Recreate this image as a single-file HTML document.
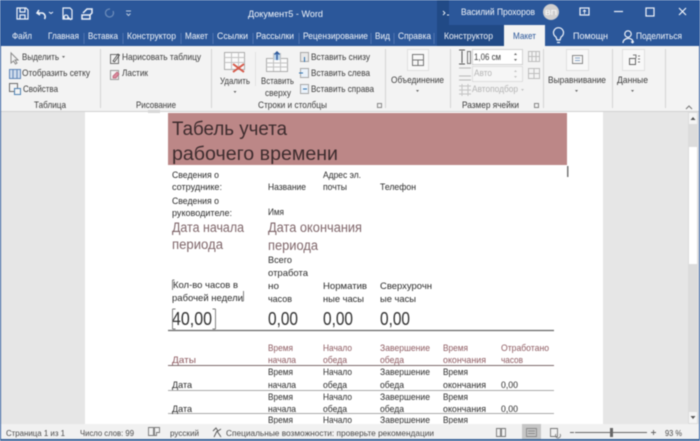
<!DOCTYPE html>
<html lang="ru"><head><meta charset="utf-8"><title>Документ5 - Word</title>
<style>
html,body{margin:0;padding:0;width:700px;height:441px;overflow:hidden;background:#fff}
svg{display:block;filter:blur(.4px)}
text{font-family:"Liberation Sans",sans-serif;font-size:9px;fill:#3a3a3a}
.w text{fill:#f2f5fa;font-size:9.2px}
.r text{fill:#3c3c3c;font-size:9.2px}
.d text{fill:#2c2c2c;font-size:9.4px}
.h text{fill:#8d5a60;font-size:9.4px}
.p text{fill:#7f666a;font-size:13.5px}
.b text{fill:#333;font-size:18.500px}
.s text{fill:#4a4a4a;font-size:8.400px}
</style></head><body>
<svg width="700" height="441" viewBox="0 0 700 441" xmlns="http://www.w3.org/2000/svg">
<rect width="700" height="441" fill="#e6e6e6"/>
<!-- title bar -->
<rect width="700" height="46" fill="#2b579a"/>
<rect x="437" y="0" width="67" height="46" fill="#214a86"/>
<rect x="449" y="0" width="55" height="25" fill="#2b579a"/>
<rect x="504" y="25" width="41" height="22" fill="#f3f3f3"/>
<!-- qat icons -->
<g fill="none" stroke="#eef2f9" stroke-width="1.200">
<path d="M17 8h9l2 2v9H17zM20 8v4h5V8M20 19v-4h5v4"/>
<path d="M39 10l-2 3 3 2M37.500 13h5a4 4 0 0 1 2 6" stroke-width="1.500"/>
<path d="M49 12l2 1.500 2-1.500" stroke-width="1"/>
<path d="M63 8h7l2 2v9H63zM66 15a2 2 0 1 0 .1 0M68 17l3 3"/>
<path d="M83 13l4-4 5 0 0 4-2 2M82 15h8v4h-8z" stroke-width="1.500"/>
<path d="M110 9a4 4 0 1 0 3 2" stroke="#6c8cba"/>
<path d="M126 11h5M126.500 13.500l2 2 2-2" stroke-width="1" stroke="#b8c8de"/>
<path d="M443 11l2 2-2 2M447 15h2" stroke-width=".9"/>
<rect x="580" y="8" width="9" height="7"/><path d="M584.500 14v-4M583 11.500l1.500-1.500 1.500 1.500" stroke-width=".9"/>
<path d="M614 11.500h9"/>
<rect x="646" y="8" width="8" height="8"/>
<path d="M679 8l7 7M686 8l-7 7"/>
<path d="M557 40l-1-3a5 5 0 1 1 5 0l-1 3zM557 42.500h3"/>
<circle cx="628" cy="34" r="3.200"/><path d="M623 43c0-6 10-6 10-1M631 42h3M632.500 40.500v3"/>
</g>
<circle cx="551" cy="12" r="8" fill="#d0cfcf"/>
<g class="w">
<text x="248" y="17" textLength="75" lengthAdjust="spacingAndGlyphs">Документ5 - Word</text>
<text x="12" y="39" textLength="20" lengthAdjust="spacingAndGlyphs">Файл</text>
<text x="48" y="39" textLength="31" lengthAdjust="spacingAndGlyphs">Главная</text>
<text x="88" y="39" textLength="30" lengthAdjust="spacingAndGlyphs">Вставка</text>
<text x="127" y="39" textLength="49" lengthAdjust="spacingAndGlyphs">Конструктор</text>
<text x="185" y="39" textLength="23" lengthAdjust="spacingAndGlyphs">Макет</text>
<text x="217" y="39" textLength="31" lengthAdjust="spacingAndGlyphs">Ссылки</text>
<text x="256" y="39" textLength="38" lengthAdjust="spacingAndGlyphs">Рассылки</text>
<text x="303" y="39" textLength="65" lengthAdjust="spacingAndGlyphs">Рецензирование</text>
<text x="375" y="39" textLength="15" lengthAdjust="spacingAndGlyphs">Вид</text>
<text x="398" y="39" textLength="33" lengthAdjust="spacingAndGlyphs">Справка</text>
<text x="444" y="39" textLength="49" lengthAdjust="spacingAndGlyphs">Конструктор</text>
<text x="573" y="39" textLength="35" lengthAdjust="spacingAndGlyphs">Помощн</text>
<text x="636" y="39" textLength="46" lengthAdjust="spacingAndGlyphs">Поделиться</text>
<text x="461" y="15" textLength="74" lengthAdjust="spacingAndGlyphs">Василий Прохоров</text>
</g>
<text x="513" y="39" textLength="23" lengthAdjust="spacingAndGlyphs" style="fill:#2b579a;font-size:9.2px">Макет</text>
<text x="545" y="15" textLength="12" lengthAdjust="spacingAndGlyphs" style="fill:#fff;font-size:7.500px">ВП</text>
<!-- tab separators -->
<path d="M84 33v11M123 33v11M181 33v11M213 33v11M253 33v11M299 33v11M371 33v11M394 33v11M434 33v11" stroke="#5a7db3" stroke-width=".8"/>
<!-- ribbon -->
<rect y="46" width="700" height="65" fill="#f3f3f3"/>
<rect x="504" y="46" width="41" height="2" fill="#f3f3f3"/>
<path d="M100.500 49v59M211.500 49v59M385.500 49v59M450.500 49v59M543.500 49v59M612.500 49v59M665.500 49v59" stroke="#d4d4d4"/>
<path d="M255.500 52v34" stroke="#e2e2e2"/>
<path d="M0 111.500h700" stroke="#d2d2d2"/>
<!-- left icons -->
<g fill="none" stroke-width="1">
<path d="M11 53v10l2.500-2 2 3 1.500-1-2-3h3z" stroke="#8a8a8a"/>
<rect x="9.500" y="69.500" width="11" height="9" stroke="#5f86b8" fill="#cfdcec"/>
<path d="M13 70v8M17 70v8" stroke="#5f86b8"/>
<rect x="9.500" y="83.500" width="8" height="8" stroke="#6b6b6b"/>
<rect x="14.500" y="88.500" width="6" height="6" stroke="#4f82b4" fill="#f3f3f3"/>
<rect x="110.500" y="54.500" width="8" height="9" stroke="#6f6f6f"/>
<path d="M113 61l5-7 1.500 1-5 7z" stroke="#444" stroke-width=".8"/>
<rect x="110.500" y="70.500" width="8" height="9" stroke="#9a9a9a"/>
<path d="M113 76l4-4 2 2-3 4h-3z" fill="#d98a9c" stroke="#b85a70" stroke-width=".7"/>
<!-- delete -->
<rect x="224.500" y="52.500" width="20" height="17" stroke="#adadad" fill="#fafafa"/>
<path d="M224.500 57.500h20M224.500 62.500h20M231.500 52.500v17M238.500 52.500v17" stroke="#c2c2c2"/>
<path d="M233 64l11 8M244 64l-11 8" stroke="#d65a4a" stroke-width="2"/>
<!-- insert above -->
<rect x="266.500" y="58.500" width="21" height="13" stroke="#adadad" fill="#fafafa"/>
<rect x="273" y="53" width="7" height="7" fill="#bcd6ee" stroke="none"/>
<path d="M266.500 63h21M266.500 67h21M273.500 53v18M280.500 53v18" stroke="#c2c2c2"/>
<path d="M277 60v-8M274.500 54.500l2.500-2.500 2.500 2.500" stroke="#2b579a" stroke-width="1.400"/>
<!-- small insert -->
<rect x="300.500" y="52.500" width="8" height="9" stroke="#a8a8a8" fill="#e8e8e8"/><path d="M304.500 57v5" stroke="#2b70b0"/>
<rect x="300.500" y="68.500" width="8" height="9" stroke="#a8a8a8" fill="#eaf2fa"/><path d="M299 73h4" stroke="#2b70b0"/>
<rect x="300.500" y="84.500" width="8" height="9" stroke="#a8a8a8" fill="#eaf2fa"/><path d="M303 89h4" stroke="#2b70b0"/>
<!-- large button boxes -->
<rect x="407.500" y="49.500" width="21" height="21" stroke="#e0e0e0" fill="#f8f8f8"/>
<rect x="412.500" y="54.500" width="11" height="11" stroke="#777"/><path d="M412.500 60h11M418 60v5.500" stroke="#777"/>
<rect x="566.500" y="49.500" width="22" height="21" stroke="#e0e0e0" fill="#f8f8f8"/>
<rect x="572.500" y="55.500" width="10" height="8" stroke="#888"/><path d="M575 58h5M575 60.500h5" stroke="#8aa7c8"/>
<rect x="622.500" y="49.500" width="22" height="21" stroke="#e0e0e0" fill="#f8f8f8"/>
<rect x="629.500" y="58.500" width="6" height="6" stroke="#666"/><path d="M633 55h3v3M638 56h2M638 59h2M638 62h2" stroke="#777"/>
<!-- cell size -->
<path d="M459 50h6M459 64h6M462 51v12" stroke="#555"/><rect x="467.500" y="51.500" width="3" height="12" stroke="#777"/>
<rect x="472.500" y="49.500" width="50" height="15" fill="#fff" stroke="#d0d0d0"/>
<rect x="472.500" y="66.500" width="50" height="15" fill="#f6f6f6" stroke="#dedede"/>
<rect x="528.500" y="51.500" width="11" height="10" stroke="#bdbdbd"/><path d="M532 52v9M536 52v9M529 56.500h10" stroke="#bdbdbd"/>
<rect x="528.500" y="68.500" width="11" height="10" stroke="#bdbdbd"/><path d="M534 69v9M529 73.500h10" stroke="#bdbdbd"/>
<path d="M459 68h12M459 76h12M459 80h12" stroke="#b8b8b8"/>
<path d="M459 86h12M459 90h12M459 94h12M462 84v12M468 84v12" stroke="#c4c4c4"/>
<rect x="377.500" y="103.500" width="4" height="4" stroke="#888"/>
<rect x="534.500" y="103.500" width="4" height="4" stroke="#888"/>
<path d="M686 109l3-3 3 3" stroke="#777"/>
</g>
<!-- ribbon small marks -->
<g fill="#666">
<path d="M62 56h3l-1.500 2zM233.500 91h3l-1.500 2zM416 90h3l-1.500 2zM575 90h3l-1.500 2zM631 90h3l-1.500 2z"/>
<path d="M514 55h3l-1.500-2zM514 59h3l-1.500 2z"/>
<path d="M514 72h3l-1.500-2zM514 76h3l-1.500 2zM521 89h3l-1.500 2z" fill="#c4c4c4"/>
</g>
<g class="r">
<text x="22" y="60" textLength="37" lengthAdjust="spacingAndGlyphs">Выделить</text>
<text x="22" y="76" textLength="68" lengthAdjust="spacingAndGlyphs">Отобразить сетку</text>
<text x="23" y="92" textLength="35" lengthAdjust="spacingAndGlyphs">Свойства</text>
<text x="34" y="108" textLength="32" lengthAdjust="spacingAndGlyphs">Таблица</text>
<text x="122" y="60" textLength="79" lengthAdjust="spacingAndGlyphs">Нарисовать таблицу</text>
<text x="122" y="76" textLength="26" lengthAdjust="spacingAndGlyphs">Ластик</text>
<text x="136" y="108" textLength="40" lengthAdjust="spacingAndGlyphs">Рисование</text>
<text x="220" y="84" textLength="30" lengthAdjust="spacingAndGlyphs">Удалить</text>
<text x="261" y="84" textLength="33" lengthAdjust="spacingAndGlyphs">Вставить</text>
<text x="265" y="96" textLength="26" lengthAdjust="spacingAndGlyphs">сверху</text>
<text x="311" y="60" textLength="59" lengthAdjust="spacingAndGlyphs">Вставить снизу</text>
<text x="311" y="76" textLength="59" lengthAdjust="spacingAndGlyphs">Вставить слева</text>
<text x="311" y="92" textLength="63" lengthAdjust="spacingAndGlyphs">Вставить справа</text>
<text x="258" y="108" textLength="69" lengthAdjust="spacingAndGlyphs">Строки и столбцы</text>
<text x="391" y="83" textLength="53" lengthAdjust="spacingAndGlyphs">Объединение</text>
<text x="474" y="60" textLength="27" lengthAdjust="spacingAndGlyphs">1,06 см</text>
<text x="474" y="76" textLength="18" lengthAdjust="spacingAndGlyphs" style="fill:#b4b4b4">Авто</text>
<text x="472" y="92" textLength="46" lengthAdjust="spacingAndGlyphs" style="fill:#b4b4b4">Автоподбор</text>
<text x="462" y="108" textLength="57" lengthAdjust="spacingAndGlyphs">Размер ячейки</text>
<text x="548" y="83" textLength="58" lengthAdjust="spacingAndGlyphs">Выравнивание</text>
<text x="617" y="83" textLength="31" lengthAdjust="spacingAndGlyphs">Данные</text>
</g>
<!-- page -->
<rect x="85" y="112" width="518" height="312" fill="#fff"/>
<rect x="148" y="110" width="12" height="3" fill="#d8d8d8"/>
<rect x="168" y="113" width="399" height="52" fill="#bc8787"/>
<rect x="567" y="166" width="1.500" height="11" fill="#777"/>
<text x="172" y="135" textLength="115" lengthAdjust="spacingAndGlyphs" style="font-size:19px;fill:#3d2c2e">Табель учета</text>
<text x="172" y="160" textLength="166" lengthAdjust="spacingAndGlyphs" style="font-size:19px;fill:#3d2c2e">рабочего времени</text>
<g class="d">
<text x="172" y="178" textLength="47" lengthAdjust="spacingAndGlyphs">Сведения о</text>
<text x="172" y="190" textLength="50" lengthAdjust="spacingAndGlyphs">сотруднике:</text>
<text x="268" y="190" textLength="38" lengthAdjust="spacingAndGlyphs">Название</text>
<text x="323" y="178" textLength="38" lengthAdjust="spacingAndGlyphs">Адрес эл.</text>
<text x="323" y="190" textLength="24" lengthAdjust="spacingAndGlyphs">почты</text>
<text x="380" y="190" textLength="36" lengthAdjust="spacingAndGlyphs">Телефон</text>
<text x="172" y="204" textLength="47" lengthAdjust="spacingAndGlyphs">Сведения о</text>
<text x="172" y="216" textLength="60" lengthAdjust="spacingAndGlyphs">руководителе:</text>
<text x="268" y="215" textLength="16" lengthAdjust="spacingAndGlyphs">Имя</text>
<text x="268" y="263" textLength="24" lengthAdjust="spacingAndGlyphs">Всего</text>
<text x="268" y="276" textLength="40" lengthAdjust="spacingAndGlyphs">отработа</text>
<text x="268" y="289" textLength="11" lengthAdjust="spacingAndGlyphs">но</text>
<text x="268" y="302" textLength="24" lengthAdjust="spacingAndGlyphs">часов</text>
<text x="173" y="288" textLength="65" lengthAdjust="spacingAndGlyphs">Кол-во часов в</text>
<text x="172" y="301" textLength="71" lengthAdjust="spacingAndGlyphs">рабочей недели</text>
<text x="323" y="289" textLength="44" lengthAdjust="spacingAndGlyphs">Норматив</text>
<text x="323" y="302" textLength="41" lengthAdjust="spacingAndGlyphs">ные часы</text>
<text x="380" y="289" textLength="52" lengthAdjust="spacingAndGlyphs">Сверхурочн</text>
<text x="380" y="302" textLength="36" lengthAdjust="spacingAndGlyphs">ые часы</text>
</g>
<g class="p">
<text x="172" y="232" textLength="72" lengthAdjust="spacingAndGlyphs">Дата начала</text>
<text x="268" y="232" textLength="94" lengthAdjust="spacingAndGlyphs">Дата окончания</text>
<text x="172" y="249" textLength="51" lengthAdjust="spacingAndGlyphs">периода</text>
<text x="268" y="250" textLength="50" lengthAdjust="spacingAndGlyphs">периода</text>
</g>
<g class="b">
<text x="172" y="325" textLength="40" lengthAdjust="spacingAndGlyphs">40,00</text>
<text x="268" y="325" textLength="30" lengthAdjust="spacingAndGlyphs">0,00</text>
<text x="323" y="325" textLength="30" lengthAdjust="spacingAndGlyphs">0,00</text>
<text x="380" y="325" textLength="30" lengthAdjust="spacingAndGlyphs">0,00</text>
</g>
<path d="M172.500 280v10M172.500 280h2M243.500 291v10M243.500 301h-2M172.500 309v20M172.500 309h3M172.500 329h3M215.500 309v20M215.500 309h-3M215.500 329h-3" stroke="#777" fill="none" stroke-width=".9"/>
<path d="M168 330.500h386" stroke="#666" stroke-width="1.300"/>
<g class="h">
<text x="172" y="363" textLength="24" lengthAdjust="spacingAndGlyphs">Даты</text>
<text x="268" y="351" textLength="25" lengthAdjust="spacingAndGlyphs">Время</text>
<text x="268" y="363" textLength="28" lengthAdjust="spacingAndGlyphs">начала</text>
<text x="323" y="351" textLength="29" lengthAdjust="spacingAndGlyphs">Начало</text>
<text x="323" y="363" textLength="24" lengthAdjust="spacingAndGlyphs">обеда</text>
<text x="380" y="351" textLength="50" lengthAdjust="spacingAndGlyphs">Завершение</text>
<text x="380" y="363" textLength="24" lengthAdjust="spacingAndGlyphs">обеда</text>
<text x="443" y="351" textLength="25" lengthAdjust="spacingAndGlyphs">Время</text>
<text x="443" y="363" textLength="43" lengthAdjust="spacingAndGlyphs">окончания</text>
<text x="501" y="351" textLength="48" lengthAdjust="spacingAndGlyphs">Отработано</text>
<text x="501" y="363" textLength="22" lengthAdjust="spacingAndGlyphs">часов</text>
</g>
<path d="M168 365.500h386" stroke="#7d6a6c"/>
<path d="M168 390.500h386M168 413.500h386" stroke="#aaa"/>
<g class="d">
<text x="172" y="388" textLength="20" lengthAdjust="spacingAndGlyphs">Дата</text>
<text x="268" y="375" textLength="25" lengthAdjust="spacingAndGlyphs">Время</text>
<text x="268" y="388" textLength="28" lengthAdjust="spacingAndGlyphs">начала</text>
<text x="323" y="375" textLength="29" lengthAdjust="spacingAndGlyphs">Начало</text>
<text x="323" y="388" textLength="24" lengthAdjust="spacingAndGlyphs">обеда</text>
<text x="380" y="375" textLength="50" lengthAdjust="spacingAndGlyphs">Завершение</text>
<text x="380" y="388" textLength="24" lengthAdjust="spacingAndGlyphs">обеда</text>
<text x="443" y="375" textLength="25" lengthAdjust="spacingAndGlyphs">Время</text>
<text x="443" y="388" textLength="43" lengthAdjust="spacingAndGlyphs">окончания</text>
<text x="501" y="388" textLength="17" lengthAdjust="spacingAndGlyphs">0,00</text>
<text x="172" y="412" textLength="20" lengthAdjust="spacingAndGlyphs">Дата</text>
<text x="268" y="400" textLength="25" lengthAdjust="spacingAndGlyphs">Время</text>
<text x="268" y="412" textLength="28" lengthAdjust="spacingAndGlyphs">начала</text>
<text x="323" y="400" textLength="29" lengthAdjust="spacingAndGlyphs">Начало</text>
<text x="323" y="412" textLength="24" lengthAdjust="spacingAndGlyphs">обеда</text>
<text x="380" y="400" textLength="50" lengthAdjust="spacingAndGlyphs">Завершение</text>
<text x="380" y="412" textLength="24" lengthAdjust="spacingAndGlyphs">обеда</text>
<text x="443" y="400" textLength="25" lengthAdjust="spacingAndGlyphs">Время</text>
<text x="443" y="412" textLength="43" lengthAdjust="spacingAndGlyphs">окончания</text>
<text x="501" y="412" textLength="17" lengthAdjust="spacingAndGlyphs">0,00</text>
<text x="268" y="423" textLength="25" lengthAdjust="spacingAndGlyphs">Время</text>
<text x="323" y="423" textLength="29" lengthAdjust="spacingAndGlyphs">Начало</text>
<text x="380" y="423" textLength="50" lengthAdjust="spacingAndGlyphs">Завершение</text>
<text x="443" y="423" textLength="25" lengthAdjust="spacingAndGlyphs">Время</text>
</g>
<!-- scrollbar -->
<rect x="688" y="112" width="10" height="312" fill="#dcdcdc"/>
<rect x="689" y="147" width="8" height="117" fill="#fff"/>
<rect x="689" y="113" width="8" height="11" fill="#f4f4f4"/>
<rect x="689" y="412" width="8" height="11" fill="#f4f4f4"/>
<path d="M690.500 120l2.500-3 2.500 3zM690.500 416l2.500 3 2.500-3z" fill="#555"/>
<!-- status bar -->
<rect y="424" width="700" height="15" fill="#f1f1f1"/>
<rect x="522" y="424" width="19" height="15" fill="#c6c6c6"/>
<g class="s">
<text x="6" y="436" textLength="59" lengthAdjust="spacingAndGlyphs">Страница 1 из 1</text>
<text x="80" y="436" textLength="54" lengthAdjust="spacingAndGlyphs">Число слов: 99</text>
<text x="170" y="436" textLength="29" lengthAdjust="spacingAndGlyphs">русский</text>
<text x="226" y="436" textLength="208" lengthAdjust="spacingAndGlyphs">Специальные возможности: проверьте рекомендации</text>
<text x="665" y="436" textLength="17" lengthAdjust="spacingAndGlyphs">93 %</text>
</g>
<g fill="none" stroke="#777" stroke-width=".9">
<path d="M148.500 427.500h5v8h-5zM154.500 427.500h5v5h-3v3h-2z"/>
<path d="M213 431l3-3 2 3 3-2M217 431l-3 6M217 431l4 6" stroke="#555"/>
<path d="M496.500 428.500h4v8h-4zM501.500 428.500h4v8h-4z"/>
<path d="M526.500 428.500h10v8h-10zM528 431h7M528 433.500h7" stroke="#888"/>
<path d="M550.500 428.500h7v8h-7zM556 434a2.500 2.500 0 1 0 4 0"/>
<path d="M570 432.500h4M575 432.500h72M651 432.500h5M653.500 430v5" stroke="#666"/>
</g>
<rect x="610" y="428" width="3" height="9" fill="#666"/>
<!-- outer border -->
<rect x="0" y="46" width="1" height="395" fill="#2b579a"/>
<rect x="699" y="46" width="1" height="395" fill="#2b579a"/>
<rect x="0" y="439" width="700" height="2" fill="#3a6399"/>
</svg>
</body></html>
